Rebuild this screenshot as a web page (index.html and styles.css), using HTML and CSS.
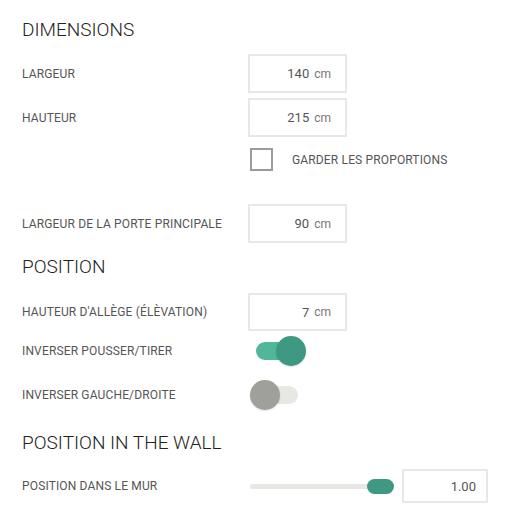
FILE: index.html
```html
<!DOCTYPE html>
<html lang="fr">
<head>
<meta charset="utf-8">
<link rel="stylesheet" href="styles.css">
</head>
<body>
<div class="panel">
  <h2 class="title">DIMENSIONS</h2>
  <div class="row row-1">
    <span class="label">LARGEUR</span>
    <div class="field"><span class="num">140</span><span class="unit">cm</span></div>
  </div>
  <div class="row row-2">
    <span class="label">HAUTEUR</span>
    <div class="field"><span class="num">215</span><span class="unit">cm</span></div>
  </div>
  <div class="row row-check">
    <span class="label"></span>
    <div class="check-wrap"><span class="checkbox"></span><span class="label">GARDER LES PROPORTIONS</span></div>
  </div>
  <div class="row row-4">
    <span class="label">LARGEUR DE LA PORTE PRINCIPALE</span>
    <div class="field"><span class="num">90</span><span class="unit">cm</span></div>
  </div>
  <h2 class="title title-2">POSITION</h2>
  <div class="row row-5">
    <span class="label">HAUTEUR D'ALLÈGE (ÉLÈVATION)</span>
    <div class="field"><span class="num">7</span><span class="unit">cm</span></div>
  </div>
  <div class="row row-toggle1">
    <span class="label">INVERSER POUSSER/TIRER</span>
    <div class="toggle on"><span class="track"></span><span class="knob"></span></div>
  </div>
  <div class="row row-toggle2">
    <span class="label">INVERSER GAUCHE/DROITE</span>
    <div class="toggle"><span class="track"></span><span class="knob"></span></div>
  </div>
  <h2 class="title title-3">POSITION IN THE WALL</h2>
  <div class="row row-slider">
    <span class="label">POSITION DANS LE MUR</span>
    <div class="slider-wrap">
      <div class="slider"><span class="slider-track"></span><span class="slider-thumb"></span></div>
      <div class="field small"><span class="num">1.00</span></div>
    </div>
  </div>
</div>
</body>
</html>
```

FILE: styles.css
```css
html, body {
  margin: 0;
  padding: 0;
  background: #ffffff;
}
body {
  font-family: Roboto, "Liberation Sans", sans-serif;
  color: #333;
}
.panel {
  padding: 18px 0 0 22px;
  display: flex;
  flex-direction: column;
  width: 480px;
}
.title {
  margin: 0;
  font-size: 19px;
  font-weight: 300;
  line-height: 24px;
  height: 24px;
  color: #222;
}
.title-2 { margin-top: 12px; }
.title-3 { margin-top: 21px; }
.row {
  display: grid;
  grid-template-columns: 226px auto;
  align-items: center;
}
.label {
  font-size: 12px;
  font-weight: 400;
  color: #555;
  letter-spacing: 0.15px;
}
.row-1 { margin-top: 12px; height: 39px; }
.row-2 { margin-top: 5px; height: 39px; }
.row-check { margin-top: 11px; height: 23px; }
.row-4 { margin-top: 33px; height: 39px; }
.row-5 { margin-top: 14px; height: 38px; }
.row-toggle1 { margin-top: 5px; height: 30px; }
.row-toggle2 { margin-top: 14px; height: 30px; }
.row-slider { margin-top: 14px; height: 34px; }

.field {
  box-sizing: border-box;
  width: 99px;
  height: 100%;
  border: 2px solid #e8e8e4;
  display: flex;
  align-items: center;
  justify-content: flex-end;
  padding-right: 14px;
  gap: 5px;
}
.num {
  font-size: 13px;
  font-weight: 400;
  color: #555;
}
.unit {
  font-size: 12px;
  color: #777;
}
.check-wrap {
  display: flex;
  align-items: center;
  gap: 19px;
  padding-left: 2px;
}
.checkbox {
  box-sizing: border-box;
  width: 23px;
  height: 23px;
  border: 2px solid #9b9b98;
}
.toggle {
  position: relative;
  width: 56px;
  height: 30px;
  margin-left: 2px;
}
.track {
  position: absolute;
  left: 6px;
  top: 6px;
  width: 42px;
  height: 18px;
  border-radius: 9px;
  background: #e7e8e3;
}
.knob {
  position: absolute;
  left: 0;
  top: 0;
  width: 30px;
  height: 30px;
  border-radius: 50%;
  background: #9f9f9b;
  box-shadow: 0 1px 2px rgba(0,0,0,0.12);
}
.toggle.on .track { background: #50b898; }
.toggle.on .knob { left: 26px; background: #3f9881; }

.slider-wrap {
  display: flex;
  align-items: center;
  height: 100%;
  padding-left: 2px;
  gap: 8px;
}
.slider {
  position: relative;
  width: 144px;
  height: 15px;
}
.slider-track {
  position: absolute;
  left: 0;
  right: 2px;
  top: 5px;
  height: 5px;
  border-radius: 3px;
  background: #e7e8e3;
}
.slider-thumb {
  position: absolute;
  right: 0;
  top: 0;
  width: 27px;
  height: 15px;
  border-radius: 8px;
  background: #3f9881;
}
.field.small {
  width: 86px;
  padding-right: 10px;
}
```
